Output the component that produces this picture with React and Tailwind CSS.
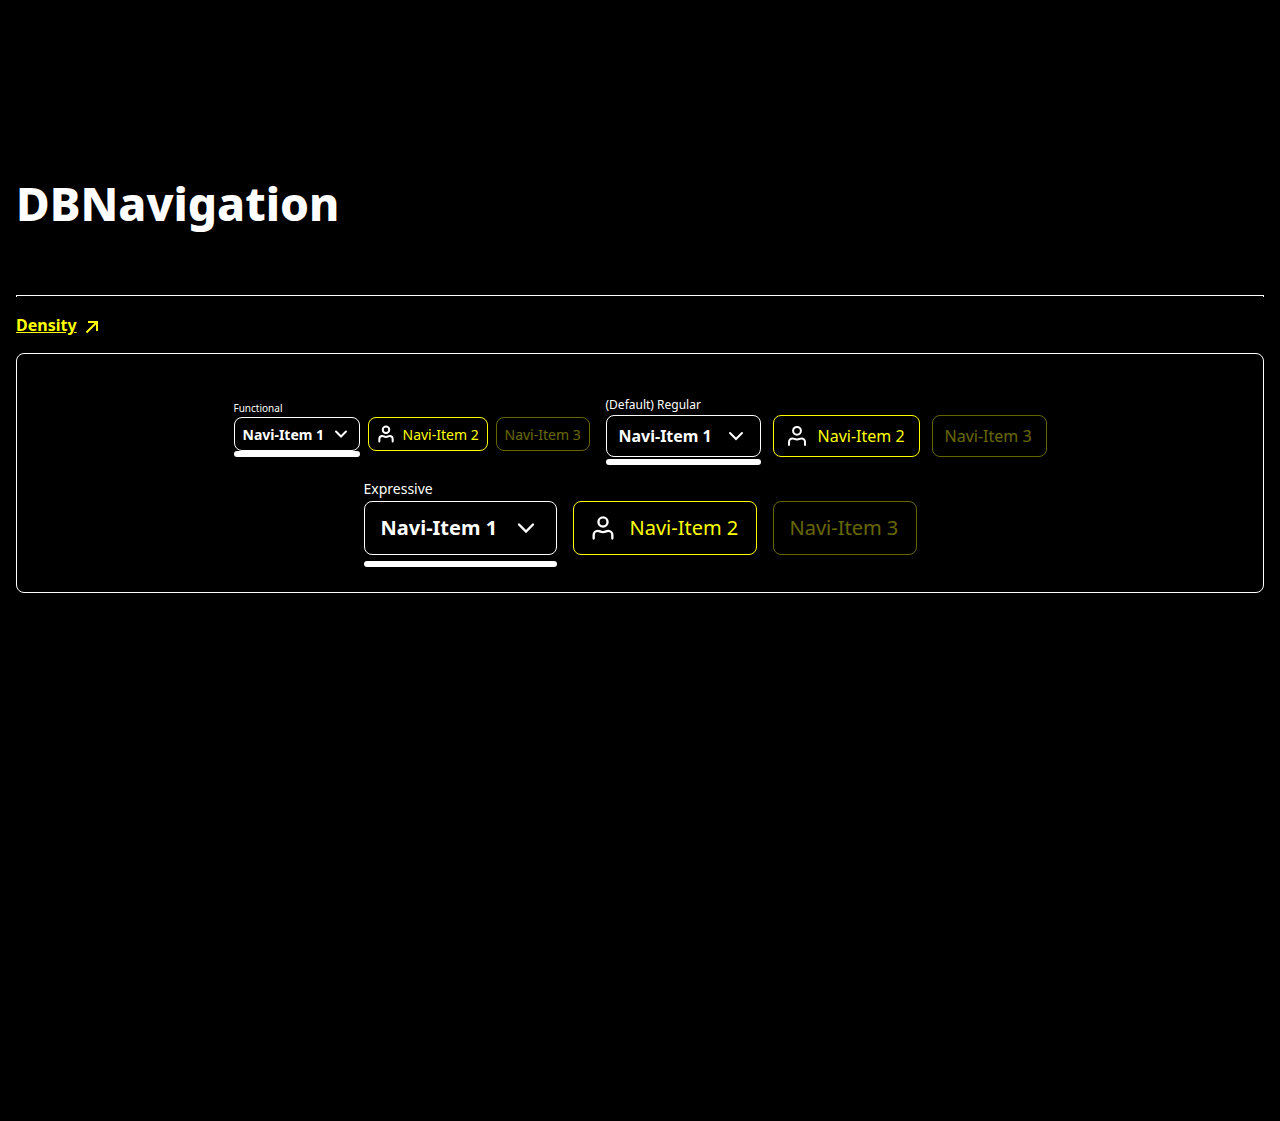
const sizes = {
  functional: {
    label: 'h-[14px] text-[10px] leading-[11px]',
    list: 'gap-2',
    item: 'h-[34px] px-2 text-[14px]',
    widths: ['w-[126px]', 'w-[120px]', 'w-[94px]'],
    icon: 'size-5',
    stroke: 2.4,
    bar: 'top-[34px]',
    userGap: 'gap-[7px] pl-[7px]',
  },
  regular: {
    label: 'h-[18px] text-[12px] leading-[16px]',
    list: 'gap-3',
    item: 'h-[42px] px-3 text-[16px]',
    widths: ['w-[155px]', 'w-[147px]', 'w-[115px]'],
    icon: 'size-6',
    stroke: 2,
    bar: 'top-[44px]',
    userGap: 'gap-[9px] pl-[11px]',
  },
  expressive: {
    label: 'h-5 text-[14px] leading-[16px]',
    list: 'gap-4',
    item: 'h-[54px] px-4 text-[20px]',
    widths: ['w-[193px]', 'w-[184px]', 'w-[144px]'],
    icon: 'size-7',
    stroke: 2,
    bar: 'top-[60px]',
    userGap: 'gap-[13px] pl-[15px]',
  },
};

function ChevronIcon({ className, stroke }) {
  return (
    <svg viewBox="0 0 24 24" className={className} fill="none" stroke="currentColor" strokeWidth={stroke} strokeLinecap="round" aria-hidden="true">
      <path d="M6 9l6 6l6-6" />
    </svg>
  );
}

function UserIcon({ className, stroke }) {
  return (
    <svg viewBox="0 0 24 24" className={className} fill="none" stroke="currentColor" strokeWidth={stroke} strokeLinecap="round" aria-hidden="true">
      <circle cx="12" cy="6.800" r="3.900" />
      <path d="M4 21v-3a3.500 3.500 0 0 1 3.500-3.500c1.800 0 2 1 4.500 1s2.700-1 4.500-1a3.500 3.500 0 0 1 3.500 3.500v3" />
    </svg>
  );
}

function ArrowIcon() {
  return (
    <svg viewBox="0 0 20 20" className="size-5" fill="none" stroke="currentColor" strokeWidth="2" aria-hidden="true">
      <path d="M5 7h9v9M14 7L3.500 17.500" />
    </svg>
  );
}

function Navigation({ title, size }) {
  const s = sizes[size];
  const base = 'flex items-center whitespace-nowrap rounded-lg border ' + s.item;
  return (
    <div>
      <p className={s.label}>{title}</p>
      <nav aria-label={title}>
        <ul className={'flex ' + s.list}>
          <li className="relative">
            <button type="button" className={base + ' justify-between border-white font-bold ' + s.widths[0]}>
              Navi-Item 1
              <ChevronIcon stroke={s.stroke} className={'shrink-0 ' + s.icon} />
            </button>
            <span className={'absolute inset-x-0 h-1.5 rounded-full bg-white ' + s.bar} />
          </li>
          <li>
            <a href="#item-2" className={base + ' border-[#ffff00] text-[#ffff00] ' + s.widths[1] + ' ' + s.userGap}>
              <UserIcon stroke={s.stroke} className={'shrink-0 text-white ' + s.icon} />
              Navi-Item 2
            </a>
          </li>
          <li>
            <button type="button" disabled className={base + ' border-[#ffff00] text-[#ffff00] opacity-40 ' + s.widths[2]}>
              Navi-Item 3
            </button>
          </li>
        </ul>
      </nav>
    </div>
  );
}

export default function App() {
  return (
    <main className="min-h-screen bg-black px-4 pt-[171px] font-['Noto_Sans',sans-serif] text-white">
      <h1 className="text-[46px] leading-[64px] font-extrabold">DBNavigation</h1>
      <hr className="mt-[60px] h-[2px] border-x border-t border-white" />
      <a href="#density" className="mt-4 flex w-fit items-center gap-1.5 text-[16px] leading-6 font-bold text-[#ffff00]">
        <span className="underline">Density</span>
        <ArrowIcon />
      </a>
      <section className="mt-4 flex flex-wrap items-center justify-center gap-x-4 gap-y-6 rounded-lg border border-white px-[200px] pt-[43px] pb-[37px]">
        <Navigation title="Functional" size="functional" />
        <Navigation title="(Default) Regular" size="regular" />
        <Navigation title="Expressive" size="expressive" />
      </section>
    </main>
  );
}
